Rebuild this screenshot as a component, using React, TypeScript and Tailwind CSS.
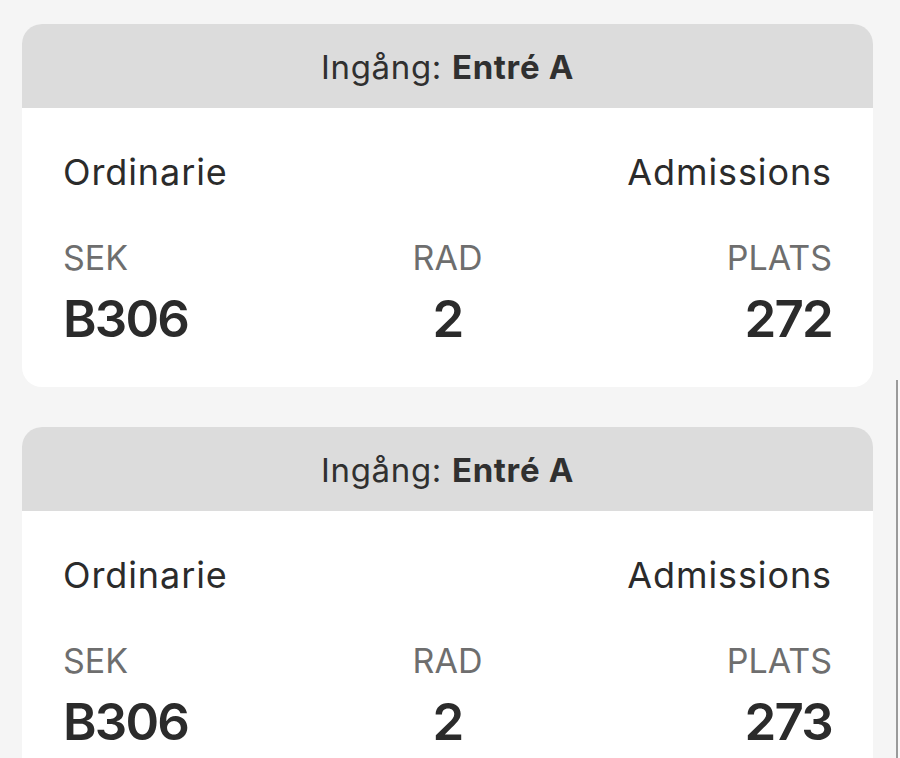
const tickets = [
  { entrance: "Entré A", type: "Ordinarie", area: "Admissions", section: "B306", row: "2", seat: "272" },
  { entrance: "Entré A", type: "Ordinarie", area: "Admissions", section: "B306", row: "2", seat: "273" },
];

function TicketCard({ t }: { t: (typeof tickets)[number] }) {
  return (
    <div className="w-[851px] shrink-0 overflow-hidden rounded-[20px] bg-white">
      <div className="flex h-[84px] items-center justify-center bg-[#dcdcdc] pt-[2px] text-[33px] leading-[33px] tracking-[0.02em] text-[#303030]">
        <span>
          Ingång: <span className="font-bold">{t.entrance}</span>
        </span>
      </div>
      <div className="px-[41px] pt-[46px] pb-[43px]">
        <div className="flex justify-between text-[36px] leading-[36px] tracking-[0.025em] text-[#2b2b2b]">
          <span>{t.type}</span>
          <span>{t.area}</span>
        </div>
        <div className="mt-[51px] grid grid-cols-3">
          <div className="text-left">
            <div className="text-[34px] leading-[34px] text-[#6e6e6e]">SEK</div>
            <div className="mt-[18px] text-[51px] leading-[51px] font-semibold tracking-[-0.035em] text-[#2b2b2b]">{t.section}</div>
          </div>
          <div className="text-center">
            <div className="text-[34px] leading-[34px] text-[#6e6e6e]">RAD</div>
            <div className="mt-[18px] text-[51px] leading-[51px] font-semibold tracking-[-0.035em] text-[#2b2b2b]">{t.row}</div>
          </div>
          <div className="text-right">
            <div className="text-[34px] leading-[34px] text-[#6e6e6e]">PLATS</div>
            <div className="mt-[18px] text-[51px] leading-[51px] font-semibold tracking-[-0.035em] text-[#2b2b2b]">{t.seat}</div>
          </div>
        </div>
      </div>
    </div>
  );
}

export default function App() {
  return (
    <div className="relative h-[758px] w-[900px] overflow-hidden bg-[#f5f5f5] font-['Inter',sans-serif]">
      <div className="flex flex-col gap-[40px] pt-[24px] pl-[22px]">
        {tickets.map((t, i) => (
          <TicketCard key={i} t={t} />
        ))}
      </div>
      {/* scroll indicator */}
      <div className="absolute top-[380px] right-0 bottom-0 w-[4px] bg-[#f9f9f9]">
        <div className="h-full w-[2px] bg-[#9a9a9a]" />
      </div>
    </div>
  );
}
